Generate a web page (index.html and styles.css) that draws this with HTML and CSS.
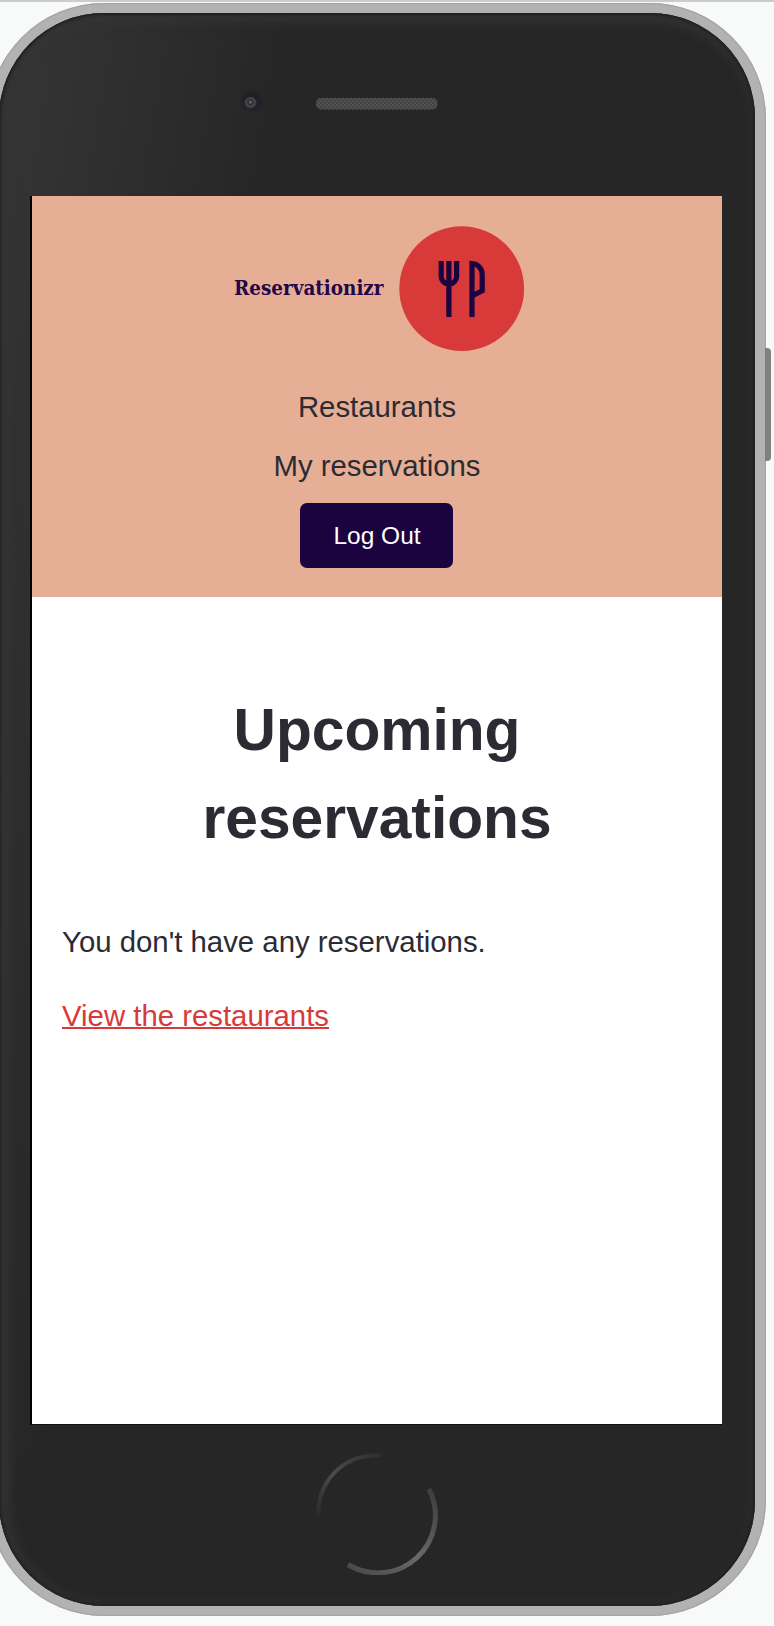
FILE: index.html
```html
<!DOCTYPE html>
<html lang="en">
<head>
<meta charset="utf-8">
<title>Reservationizr</title>
<link rel="stylesheet" href="styles.css">
</head>
<body>
<div class="stage">
  <div class="phone">
    <div class="side-button"></div>
    <div class="bezel">
      <div class="bezel-top">
        <svg class="sensors" width="240" height="40" viewBox="0 0 240 40">
          <defs>
            <pattern id="mesh" width="4" height="4" patternUnits="userSpaceOnUse">
              <rect width="4" height="4" fill="#424242"/>
              <rect width="2" height="2" fill="#525252"/>
              <rect x="2" y="2" width="2" height="2" fill="#525252"/>
            </pattern>
            <radialGradient id="lens" cy=".4">
              <stop offset="0" stop-color="#77777e"/>
              <stop offset=".35" stop-color="#2c2c33"/>
              <stop offset=".7" stop-color="#4a4a51"/>
              <stop offset="1" stop-color="#242329"/>
            </radialGradient>
            <radialGradient id="halo">
              <stop offset=".5" stop-color="#201f26"/>
              <stop offset="1" stop-color="#201f26" stop-opacity="0"/>
            </radialGradient>
          </defs>
          <circle cx="31.500" cy="21" r="13" fill="url(#halo)"/>
          <circle cx="30.500" cy="23.500" r="6.500" fill="url(#lens)"/>
          <rect x="96" y="18" width="121.500" height="11.500" rx="5" fill="url(#mesh)"/>
        </svg>
      </div>
      <div class="screen">
        <header class="header">
          <svg class="logo" width="302" height="126" viewBox="0 0 302 126">
            <text class="logo-text" x="8" y="69" textLength="149.500" lengthAdjust="spacingAndGlyphs">Reservationizr</text>
            <circle cx="235.700" cy="62.700" r="62.400" fill="#d83a39"/>
            <g fill="none" stroke="#1b0340" stroke-width="5.200">
              <path d="M215.200 35V50.500A7.700 7.700 0 0 0 230.600 50.500V35M222.900 35V91"/>
              <path d="M246 91V37.500C252.400 38 256.200 43 256.200 49V64.700L246 70"/>
            </g>
          </svg>
          <nav class="nav">
            <a class="nav-link">Restaurants</a>
            <a class="nav-link">My reservations</a>
            <button class="button">Log Out</button>
          </nav>
        </header>
        <main class="main">
          <h1 class="title">Upcoming reservations</h1>
          <p class="text">You don't have any reservations.</p>
          <a class="link">View the restaurants</a>
        </main>
      </div>
      <div class="bezel-bottom">
        <svg width="124" height="124" viewBox="0 0 124 124">
          <defs>
            <linearGradient id="arcA" x1="0" y1="1" x2="1" y2="0">
              <stop offset="0" stop-color="#292929"/>
              <stop offset=".45" stop-color="#4b4b4b"/>
              <stop offset="1" stop-color="#2e2e2e"/>
            </linearGradient>
            <linearGradient id="arcB" x1="0" y1="1" x2="1" y2="0">
              <stop offset="0" stop-color="#484848"/>
              <stop offset=".5" stop-color="#696969"/>
              <stop offset="1" stop-color="#3c3c3c"/>
            </linearGradient>
          </defs>
          <path d="M4.500 67A57.500 57.500 0 0 1 68 4.500" fill="none" stroke="url(#arcA)" stroke-width="4"/>
          <path d="M115 38A57.500 57.500 0 0 1 34 113.500" fill="none" stroke="url(#arcB)" stroke-width="5"/>
        </svg>
      </div>
    </div>
  </div>
</div>
</body>
</html>
```
FILE: styles.css
```css
* { box-sizing: border-box; }
body {
  margin: 0;
  background: #f8faf9;
  color: #2b2b34;
  font: 29.35px/44px "Liberation Sans", Arial, sans-serif;
}
.stage {
  height: 1626px;
  overflow: hidden;
  border-top: 2px solid #cccbd2;
  padding-top: 1px;
}
.phone {
  position: relative;
  width: 778px;
  height: 1613px;
  margin-left: -12px;
  padding: 10px 11px;
  border-radius: 116px;
  background: #b2b2b2;
  box-shadow: inset 0 0 1px 1px #a2a2a2;
}
.side-button {
  position: absolute;
  left: 777px;
  top: 345px;
  width: 6px;
  height: 113px;
  border-radius: 0 4px 4px 0;
  background: #808080;
}
.bezel {
  width: 756px;
  height: 1593px;
  border-radius: 105px;
  background: linear-gradient(100deg, #363636 0, #303030 110px, #262626 290px);
  box-shadow: inset 0 0 3px 2px #202020, inset 4px 4px 12px 5px #343434;
}
.bezel-top {
  height: 183px;
  padding: 67px 0 0 221px;
}
.sensors { display: block; }
.screen {
  width: 692px;
  height: 1229px;
  margin-left: 31px;
  border-left: 2px solid #000;
  border-bottom: 1px solid #111;
  background: #fff;
}
.header {
  display: flex;
  flex-direction: column;
  align-items: center;
  gap: 33px;
  height: 401px;
  padding-top: 30px;
  background: #e6af95;
}
.logo { display: block; }
.logo-text {
  font: bold 21px "DejaVu Serif", serif;
  fill: #23054a;
}
.nav {
  display: flex;
  flex-direction: column;
  align-items: center;
  gap: 15px;
}
.button {
  width: 153px;
  height: 65px;
  padding: 0;
  border: 0;
  border-radius: 7px;
  background: #1b0340;
  color: #fff;
  font: 24.5px "Liberation Sans", Arial, sans-serif;
}
.main { padding: 89px 30px 0; }
.title {
  margin: 0 0 58px;
  font-size: 58.7px;
  line-height: 88px;
  text-align: center;
}
.text { margin: 0 0 30px; }
.link {
  color: #d83a39;
  text-decoration: underline;
  text-decoration-thickness: 2px;
}
.bezel-bottom {
  display: flex;
  justify-content: center;
  padding: 26px 3px 0 0;
}
```
